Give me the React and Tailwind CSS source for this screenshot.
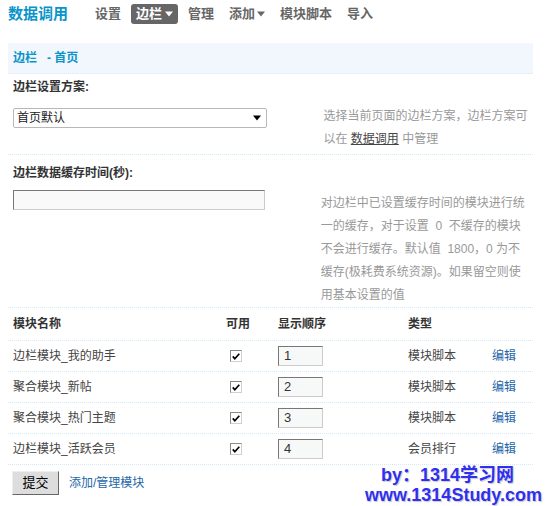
const rows = [
  { name: "边栏模块_我的助手", order: "1", type: "模块脚本" },
  { name: "聚合模块_新帖", order: "2", type: "模块脚本" },
  { name: "聚合模块_热门主题", order: "3", type: "模块脚本" },
  { name: "边栏模块_活跃会员", order: "4", type: "会员排行" },
];

function Caret() {
  return (
    <svg width="8" height="6" viewBox="0 0 8 6">
      <path d="M0 0.5h8L4 5.5z" fill="currentColor" />
    </svg>
  );
}

function Check() {
  return (
    <span className="flex h-[12px] w-[12px] items-center justify-center border border-t-[#8a8a8a] border-l-[#8a8a8a] border-r-[#d0d0d0] border-b-[#d0d0d0] bg-white">
      <svg width="8" height="7" viewBox="0 0 8 7">
        <path d="M0.8 3.4l2 2.3L7.3 0.8" stroke="#000" strokeWidth="1.7" fill="none" />
      </svg>
    </span>
  );
}

export default function App() {
  return (
    <div className="relative h-[506px] w-[545px] overflow-hidden bg-white text-[12px] text-[#333] font-['Liberation_Sans','Noto_Sans_CJK_SC',sans-serif]">
      {/* Top nav */}
      <div className="flex h-[28px] items-center pl-2">
        <h1 className="text-[15px] font-bold text-[#0a94c9]">数据调用</h1>
        <nav className="ml-[22px] flex items-center gap-[5px] text-[13px] font-bold text-[#666]">
          <span className="px-[5px]">设置</span>
          <span className="flex h-[20px] items-center gap-[3px] rounded-[3px] bg-[#666] px-[5px] text-white">
            边栏
            <Caret />
          </span>
          <span className="px-[5px]">管理</span>
          <span className="flex items-center gap-[2px] px-[5px]">
            添加
            <Caret />
          </span>
          <span className="px-[5px]">模块脚本</span>
          <span className="px-[5px]">导入</span>
        </nav>
      </div>

      <div className="ml-2 mr-3 mt-[15px]">
        {/* Title bar */}
        <div className="flex h-[31px] items-center border-b border-dotted border-[#d6e9f7] bg-[#f2f7fd] pl-[5px] font-bold text-[#0a94c9]">
          边栏&nbsp;&nbsp;&nbsp;-&nbsp;首页
        </div>

        {/* Scheme */}
        <div className="flex h-[26px] items-center pl-[5px] font-bold">边栏设置方案:</div>
        <div className="flex h-[55px] border-b border-dotted border-[#d6e9f7] pl-[5px]">
          <div className="mt-[8px] flex h-[20px] w-[255px] items-center justify-between rounded-[2px] border border-[#b8b8b8] bg-white pl-[3px] pr-[5px] text-[#222]">
            <span>首页默认</span>
            <span className="text-black">
              <Caret />
            </span>
          </div>
          <p className="ml-[56px] mt-[5px] w-[210px] leading-[23px] text-[#999]">
            选择当前页面的边栏方案，边栏方案可以在 <a className="text-[#444] underline">数据调用</a> 中管理
          </p>
        </div>

        {/* Cache time */}
        <div className="flex h-[35px] items-center pl-[5px] font-bold">边栏数据缓存时间(秒):</div>
        <div className="flex h-[118px] border-b border-dotted border-[#d6e9f7] pl-[5px]">
          <div className="h-[20px] w-[255px] border border-t-[#777] border-l-[#777] border-r-[#ccc] border-b-[#ccc] bg-[#f9f9f9]" />
          <p className="ml-[56px] mt-[2px] w-[215px] leading-[23px] text-[#999]">
            对边栏中已设置缓存时间的模块进行统
            <br />
            一的缓存，对于设置 &nbsp;0&nbsp; 不缓存的模块
            <br />
            不会进行缓存。默认值 &nbsp;1800，0 为不
            <br />
            缓存(极耗费系统资源)。如果留空则使
            <br />
            用基本设置的值
          </p>
        </div>

        {/* Table */}
        <div className="grid h-[33px] grid-cols-[213px_52px_130px_84px_1fr] items-center border-b border-dotted border-[#d6e9f7] pl-[5px] font-bold">
          <span>模块名称</span>
          <span>可用</span>
          <span>显示顺序</span>
          <span>类型</span>
          <span />
        </div>
        {rows.map((r) => (
          <div
            key={r.name}
            className="grid h-[31px] grid-cols-[213px_52px_130px_84px_1fr] items-center border-b border-dotted border-[#d6e9f7] pl-[5px] text-[#444]"
          >
            <span>{r.name}</span>
            <span className="pl-[4px]">
              <Check />
            </span>
            <span>
              <span className="flex h-[20px] w-[45px] items-center border border-t-[#777] border-l-[#777] border-r-[#ccc] border-b-[#ccc] bg-[#f7f9f8] pl-[5px] text-[13px] text-[#333]">
                {r.order}
              </span>
            </span>
            <span>{r.type}</span>
            <a className="text-[#2366a8]">编辑</a>
          </div>
        ))}

        {/* Submit */}
        <div className="flex items-center gap-[10px] pt-[6px]">
          <button className="ml-[4px] h-[24px] w-[47px] border border-t-[#eee] border-l-[#eee] border-r-[#666] border-b-[#666] bg-[#ddd] text-[13px] text-black">
            提交
          </button>
          <a className="text-[#2366a8]">添加/管理模块</a>
        </div>
      </div>

      {/* Watermark */}
      <div className="pointer-events-none absolute left-[381px] top-[465px] text-[18px] font-bold leading-[20px] text-[#2f2ff0] [text-shadow:0_0_2px_#fff,1px_1px_1px_#bbb]">
        by：1314学习网
      </div>
      <div className="pointer-events-none absolute left-[365px] top-[485px] text-[18px] font-bold leading-[20px] text-[#2f2ff0] [text-shadow:0_0_2px_#fff,1px_1px_1px_#bbb]">
        www.1314Study.com
      </div>
    </div>
  );
}
